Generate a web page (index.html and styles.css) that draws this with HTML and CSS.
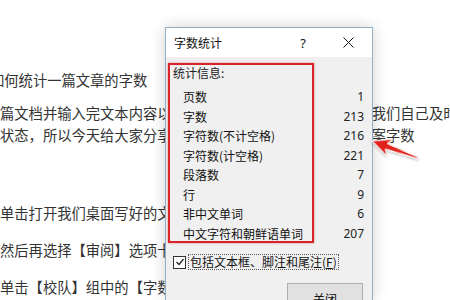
FILE: index.html
```html
<!DOCTYPE html>
<html lang="zh-CN">
<head>
<meta charset="utf-8">
<link rel="stylesheet" href="styles.css">
</head>
<body>
<div class="doc">
  <p class="line title-line">如何统计一篇文章的字数</p>
  <p class="para">篇文档并输入完文本内容以<span class="hid">后，有时想要知道其字数，单靠</span>我们自己及时<br>状态，所以今天给大家分享<span class="hid">一下如何统计一篇文章字数的方</span>案字数</p>
  <p class="para step">单击打开我们桌面写好的文</p>
  <p class="para step">然后再选择【审阅】选项卡</p>
  <p class="para step">单击【校队】组中的【字数</p>
</div>

<div class="dialog">
  <div class="titlebar">
    <span class="dlg-title">字数统计</span>
    <span class="help">?</span>
    <span class="close">
      <svg width="11" height="11" viewBox="0 0 11 11"><path d="M0.5 0.5 L10.5 10.5 M10.5 0.5 L0.5 10.5" stroke="#111" stroke-width="1"/></svg>
    </span>
  </div>
  <div class="dlg-body">
    <div class="stats-head">统计信息:</div>
    <ul class="stats">
      <li class="row"><span>页数</span><span class="num">1</span></li>
      <li class="row"><span>字数</span><span class="num">213</span></li>
      <li class="row"><span>字符数(不计空格)</span><span class="num">216</span></li>
      <li class="row"><span>字符数(计空格)</span><span class="num">221</span></li>
      <li class="row"><span>段落数</span><span class="num">7</span></li>
      <li class="row"><span>行</span><span class="num">9</span></li>
      <li class="row"><span>非中文单词</span><span class="num">6</span></li>
      <li class="row"><span>中文字符和朝鲜语单词</span><span class="num">207</span></li>
    </ul>
    <div class="check-row">
      <span class="checkbox">
        <svg width="10" height="10" viewBox="0 0 10 10"><path d="M1.5 5 L4 7.5 L8.5 2" fill="none" stroke="#222" stroke-width="1.2"/></svg>
      </span>
      <span class="check-label">包括文本框、脚注和尾注(<u>F</u>)</span>
    </div>
    <div class="btn-row">
      <button class="btn">关闭</button>
    </div>
  </div>
  <div class="highlight"></div>
</div>

<svg class="arrow" width="66" height="42" viewBox="360 124 66 42">
  <defs>
    <filter id="sh" x="-30%" y="-30%" width="160%" height="160%">
      <feDropShadow dx="0.5" dy="1" stdDeviation="1" flood-color="#000" flood-opacity="0.35"/>
    </filter>
  </defs>
  <g transform="translate(372 141) rotate(20.3)" filter="url(#sh)">
    <polygon points="0,0 19,-9 15.5,-3 49,-0.8 49,0.8 15.5,3 19,9" fill="#e2231f" stroke="#fff" stroke-width="1" stroke-linejoin="round"/>
  </g>
</svg>
</body>
</html>
```

FILE: styles.css
```css
html, body {
  margin: 0;
  padding: 0;
  background: #fff;
  width: 450px;
  height: 300px;
  overflow: hidden;
}

.doc {
  padding-top: 69px;
  font-family: "Noto Sans CJK SC", "Noto Sans", sans-serif;
  font-size: 14.3px;
  line-height: 22px;
  color: #333;
  white-space: nowrap;
}

.doc p {
  margin: 0;
}

.hid {
  visibility: hidden;
}

.title-line {
  margin-left: -10px !important;
  margin-bottom: 11px !important;
}

.para {
  margin-bottom: 56px !important;
}

.step {
  margin-bottom: 15px !important;
}

.dialog {
  position: absolute;
  left: 165px;
  top: 27px;
  width: 206px;
  height: 272px;
  border: 1px solid #8fb0c9;
  border-bottom: none;
  background: #f0f0f0;
  box-shadow: 0 0 14px rgba(0, 0, 0, 0.18);
  font-family: "Noto Sans CJK SC", "Noto Sans", sans-serif;
  font-size: 12px;
  color: #111;
  overflow: hidden;
}

.titlebar {
  height: 29px;
  background: #fff;
  display: flex;
  align-items: center;
  padding-left: 8px;
}

.dlg-title {
  flex: 1;
}

.help {
  width: 46px;
  text-align: center;
  font-family: "Noto Sans", sans-serif;
  font-size: 13px;
}

.close {
  width: 44px;
  display: flex;
  justify-content: center;
  align-items: center;
  margin-right: 2px;
}

.dlg-body {
  padding: 8px 8px 0 7px;
}

.stats-head {
  line-height: 16px;
  color: #222;
}

.stats {
  list-style: none;
  margin: 6px 0 0 0;
  padding: 0 0 0 10px;
}

.row {
  height: 19.5px;
  display: flex;
  justify-content: space-between;
  align-items: center;
}

.num {
  font-family: "Noto Sans", "Open Sans", sans-serif;
  font-size: 12px;
  color: #222;
}

.check-row {
  margin-top: 11px;
  height: 16px;
  display: flex;
  align-items: center;
}

.checkbox {
  width: 11px;
  height: 11px;
  border: 1px solid #333;
  background: #fff;
  display: flex;
  align-items: center;
  justify-content: center;
}

.check-label {
  margin-left: 2px;
  padding: 0 1px;
  border: 1px dotted #555;
  line-height: 14px;
}

.btn-row {
  display: flex;
  justify-content: flex-end;
  margin-top: 13px;
  padding-right: 1px;
}

.btn {
  width: 76px;
  height: 23px;
  background: #e1e1e1;
  border: 1px solid #adadad;
  font-family: "Noto Sans CJK SC", sans-serif;
  font-size: 12px;
  line-height: 14px;
  color: #111;
  padding: 8px 0 0 0;
  display: flex;
  justify-content: center;
  align-items: flex-start;
}

.highlight {
  position: absolute;
  left: 2px;
  top: 35px;
  width: 142px;
  height: 176px;
  border: 2px solid #d7252b;
  box-shadow: 0 0 2px rgba(200, 30, 30, 0.5);
}

.arrow {
  position: absolute;
  left: 360px;
  top: 124px;
}
```
